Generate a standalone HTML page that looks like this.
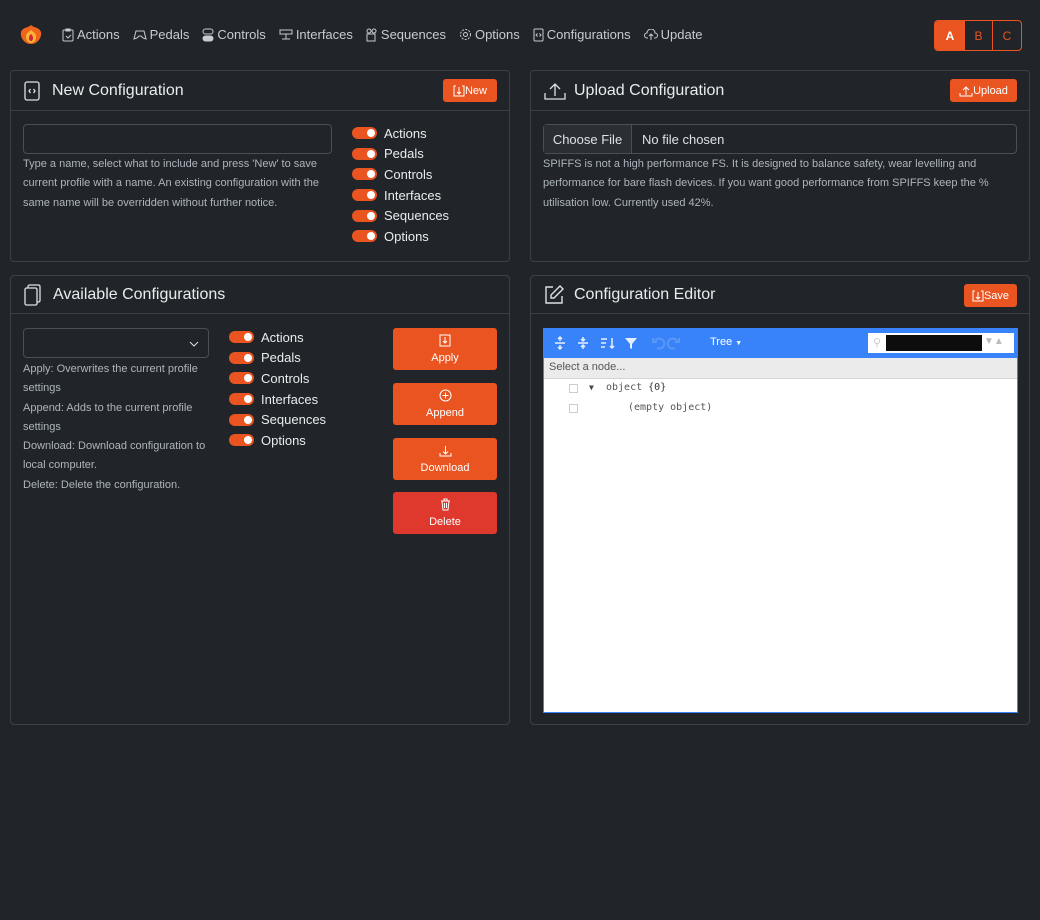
<!DOCTYPE html>
<html><head><meta charset="utf-8"><style>
*{box-sizing:border-box;margin:0;padding:0}
body{width:1040px;height:920px;background:#212529;font-family:"Liberation Sans",sans-serif;color:#dee2e6;position:relative;overflow:hidden}
.a{position:absolute}
.nav{top:27px;font-size:13px;color:#c8cbcf;display:flex;align-items:center;white-space:nowrap}
.nav span{margin-right:13px;display:flex;align-items:center}
.nav svg{margin-right:3px}
.card{position:absolute;border:1px solid #3d4146;border-radius:4px;background:#212529}
.hd{height:40px;border-bottom:1px solid #3d4146;display:flex;align-items:center;padding-left:13px;font-size:16px;color:#e9ecef}
.hd svg{margin-right:12px}
.btn{position:absolute;background:#e95420;color:#fff;border-radius:3px;font-size:11px;display:flex;align-items:center;justify-content:center}
.sm{font-size:11px;color:#adb5bd;line-height:19.3px}
.tg{display:flex;align-items:center;font-size:13px;color:#e9ecef;height:20.6px}
.tg i{display:inline-block;width:25px;height:12px;border-radius:6px;background:#e95420;position:relative;margin-right:7px}
.tg i:after{content:"";position:absolute;right:2px;top:2px;width:8px;height:8px;border-radius:50%;background:#fff}
.bb{position:absolute;left:382px;width:104px;height:42px;background:#e95420;border-radius:3px;color:#fff;font-size:11px;text-align:center;padding-top:6px;line-height:14px}
</style></head><body>
<svg class="a" style="left:19px;top:23px" width="24" height="24" viewBox="0 0 24 24"><path d="M12 2c3 3 8 2 10 7 1 5-3 12-10 12S1 14 2 9c2-5 7-4 10-7z" fill="#f0641e"/><path d="M12 7c2 2 5 3 5 7s-3 6-5 6-5-2-5-6 3-5 5-7z" fill="#f7b733"/><path d="M12 11c1 1 2 2 2 4s-1 3-2 3-2-1-2-3 1-3 2-4z" fill="#d3233d"/></svg>
<div class="a nav" style="left:62px">
<span><svg width="12" height="14" viewBox="0 0 12 14" fill="none" stroke="#c8cbcf"><rect x="1" y="2" width="10" height="11" rx="1"/><path d="M4 1h4v2H4zM4 8l2 2 3-3"/></svg>Actions</span>
<span><svg width="14" height="12" viewBox="0 0 14 12" fill="none" stroke="#c8cbcf"><path d="M3 2h8l2 8-3-1-2-2H6L4 9 1 10z"/></svg>Pedals</span>
<span><svg width="12" height="14" viewBox="0 0 12 14" fill="none" stroke="#c8cbcf"><rect x="1" y="1" width="10" height="5" rx="2.5"/><rect x="1" y="8" width="10" height="5" rx="2.5" fill="#c8cbcf"/></svg>Controls</span>
<span><svg width="14" height="12" viewBox="0 0 14 12" fill="none" stroke="#c8cbcf"><rect x="1" y="1" width="12" height="4"/><path d="M7 5v5M3 10h8"/></svg>Interfaces</span>
<span><svg width="12" height="14" viewBox="0 0 12 14" fill="none" stroke="#c8cbcf"><circle cx="3" cy="3" r="2"/><circle cx="8" cy="3" r="2"/><rect x="1" y="6" width="8" height="7"/></svg>Sequences</span>
<span><svg width="13" height="13" viewBox="0 0 13 13" fill="none" stroke="#c8cbcf"><circle cx="6.5" cy="6.5" r="2"/><circle cx="6.5" cy="6.5" r="5" stroke-dasharray="2 1.3"/></svg>Options</span>
<span><svg width="11" height="14" viewBox="0 0 11 14" fill="none" stroke="#c8cbcf"><rect x="1" y="1" width="9" height="12" rx="1"/><path d="M4.5 5.5 3 7l1.5 1.5M6.5 5.5 8 7 6.5 8.5"/></svg>Configurations</span>
<span><svg width="14" height="12" viewBox="0 0 14 12" fill="none" stroke="#c8cbcf"><path d="M4 9H3a2.5 2.5 0 0 1 0-5 4 4 0 0 1 8 0 2.5 2.5 0 0 1 0 5h-1M7 11V5M5 7l2-2 2 2"/></svg>Update</span>
</div>
<div class="a" style="left:934px;top:20px;width:88px;height:31px;border:1px solid #e95420;border-radius:4px;display:flex;font-size:12px;font-weight:bold;color:#e95420;overflow:hidden">
<div style="width:30px;background:#e95420;color:#fff;display:flex;align-items:center;justify-content:center">A</div>
<div style="width:28px;border-right:1px solid #e95420;display:flex;align-items:center;justify-content:center;font-weight:normal">B</div>
<div style="flex:1;display:flex;align-items:center;justify-content:center;font-weight:normal">C</div></div>

<div class="card" style="left:10px;top:70px;width:500px;height:192px">
<div class="hd"><svg width="16" height="20" viewBox="0 0 16 20" fill="none" stroke="#dee2e6" stroke-width="1.3"><rect x="1" y="1" width="14" height="18" rx="2"/><path d="M6.5 8 5 10l1.5 2M9.5 8 11 10l-1.5 2"/></svg>New Configuration</div>
<div class="btn" style="left:432px;top:8px;width:54px;height:23px"><svg width="12" height="12" viewBox="0 0 12 12" fill="none" stroke="#fff"><path d="M3 1H1v10h10V1H9M6 2v7M4 7l2 2 2-2"/></svg>New</div>
<div class="a" style="left:12px;top:53px;width:309px;height:30px;border:1px solid #4a4f55;border-radius:4px"></div>
<div class="a sm" style="left:12px;top:84px;width:320px">Type a name, select what to include and press 'New' to save current profile with a name. An existing configuration with the same name will be overridden without further notice.</div>
<div class="a" style="left:341px;top:52px"><div class="tg"><i></i>Actions</div><div class="tg"><i></i>Pedals</div><div class="tg"><i></i>Controls</div><div class="tg"><i></i>Interfaces</div><div class="tg"><i></i>Sequences</div><div class="tg"><i></i>Options</div></div>
</div>

<div class="card" style="left:530px;top:70px;width:500px;height:192px">
<div class="hd"><svg width="22" height="18" viewBox="0 0 22 18" fill="none" stroke="#dee2e6" stroke-width="1.3" style="margin-right:8px"><path d="M1 11v6h20v-6M11 14V2M6 7l5-5 5 5"/></svg>Upload Configuration</div>
<div class="btn" style="left:419px;top:8px;width:67px;height:23px"><svg width="14" height="12" viewBox="0 0 14 12" fill="none" stroke="#fff"><path d="M1 8v3h12V8M7 10V2M4 5l3-3 3 3"/></svg>Upload</div>
<div class="a" style="left:12px;top:53px;width:474px;height:30px;border:1px solid #4a4f55;border-radius:4px;display:flex;font-size:13px;align-items:center"><div style="height:100%;width:88px;background:#2b2f34;border-right:1px solid #4a4f55;display:flex;align-items:center;justify-content:center">Choose File</div><div style="padding-left:10px">No file chosen</div></div>
<div class="a sm" style="left:12px;top:84px;width:470px">SPIFFS is not a high performance FS. It is designed to balance safety, wear levelling and performance for bare flash devices. If you want good performance from SPIFFS keep the % utilisation low. Currently used 42%.</div>
</div>

<div class="card" style="left:10px;top:275px;width:500px;height:450px">
<div class="hd" style="height:38px"><svg width="18" height="22" viewBox="0 0 18 22" fill="none" stroke="#dee2e6" stroke-width="1.3" style="margin-right:11px"><rect x="1" y="4" width="12" height="17" rx="1.5"/><path d="M4 4V2.5A1.5 1.5 0 0 1 5.5 1h9A1.5 1.5 0 0 1 16 2.5v14A1.5 1.5 0 0 1 14.5 18H13"/></svg>Available Configurations</div>
<div class="a" style="left:12px;top:52px;width:186px;height:30px;border:1px solid #4a4f55;border-radius:4px"><svg class="a" style="left:165px;top:12px" width="10" height="6" viewBox="0 0 10 6" fill="none" stroke="#dee2e6"><path d="M1 1l4 4 4-4"/></svg></div>
<div class="a sm" style="left:12px;top:84px;width:190px">Apply: Overwrites the current profile settings<br>Append: Adds to the current profile settings<br>Download: Download configuration to local computer.<br>Delete: Delete the configuration.</div>
<div class="a" style="left:218px;top:51px"><div class="tg"><i></i>Actions</div><div class="tg"><i></i>Pedals</div><div class="tg"><i></i>Controls</div><div class="tg"><i></i>Interfaces</div><div class="tg"><i></i>Sequences</div><div class="tg"><i></i>Options</div></div>
<div class="bb" style="top:52px"><svg width="12" height="13" viewBox="0 0 12 13" fill="none" stroke="#fff"><rect x="1" y="1" width="10" height="11"/><path d="M6 3v6M4 7l2 2 2-2"/></svg><br>Apply</div>
<div class="bb" style="top:107px"><svg width="13" height="13" viewBox="0 0 13 13" fill="none" stroke="#fff"><circle cx="6.5" cy="6.5" r="5.5"/><path d="M6.5 3.5v6M3.5 6.5h6"/></svg><br>Append</div>
<div class="bb" style="top:162px"><svg width="13" height="13" viewBox="0 0 13 13" fill="none" stroke="#fff"><path d="M1 9v3h11V9M6.5 2v8M4 7.5l2.5 2.5L9 7.5"/></svg><br>Download</div>
<div class="bb" style="top:216px;background:#df382c"><svg width="11" height="13" viewBox="0 0 11 13" fill="none" stroke="#fff"><path d="M1 3h9M4 3V1h3v2M2 3l1 9h5l1-9M4.5 5v5M6.5 5v5"/></svg><br>Delete</div>
</div>

<div class="card" style="left:530px;top:275px;width:500px;height:450px">
<div class="hd" style="height:38px"><svg width="20" height="20" viewBox="0 0 20 20" fill="none" stroke="#dee2e6" stroke-width="1.4" style="margin-right:10px"><path d="M9 2H2v16h16v-7"/><path d="M16 1l3 3-9 9H7v-3z"/></svg>Configuration Editor</div>
<div class="btn" style="left:433px;top:8px;width:53px;height:23px"><svg width="12" height="12" viewBox="0 0 12 12" fill="none" stroke="#fff"><path d="M3 1H1v10h10V1H9M6 2v7M4 7l2 2 2-2"/></svg>Save</div>
<div class="a" style="left:12px;top:52px;width:475px;height:385px;border:1px solid #3883fa;background:#fff">
<div style="height:29px;background:#3883fa;position:relative">
<svg class="a" style="left:9px;top:7px" width="110" height="14" viewBox="0 0 110 14" fill="#e6efff" stroke="#e6efff"><path d="M2 7h10M7 1v4M5 3l2-2 2 2M7 13V9M5 11l2 2 2-2" fill="none" stroke-width="1.5"/><path d="M25 7h10M30 1v4M28 3l2 2 2-2M30 13V9M28 11l2-2 2 2" fill="none" stroke-width="1.5"/><path d="M48 3h6M48 7h5M48 11h4M59 2v10M57 10l2 2 2-2" fill="none" stroke-width="1.5"/><path d="M72 2h12l-5 6v5l-2-1V8z" stroke="none"/></svg>
<svg class="a" style="left:108px;top:7px" width="40" height="14" viewBox="0 0 40 14" fill="none" stroke="#5a97f5" stroke-width="2"><path d="M3 5a5 5 0 1 1 2 7M1 2v4h4"/><path d="M37 5a5 5 0 1 0-2 7M39 2v4h-4" transform="translate(-12 0)"/></svg>
<div class="a" style="left:166px;top:7px;font-size:11px;color:#fff">Tree <span style="font-size:7px">▼</span></div>
<div class="a" style="left:324px;top:4px;width:146px;height:20px;background:#fff"><div class="a" style="left:5px;top:3px;font-size:11px;color:#ccc">⚲</div><div class="a" style="left:18px;top:2px;width:96px;height:16px;background:#0d0d0d"></div><div class="a" style="left:116px;top:3px;font-size:10px;color:#bbb">▼▲</div></div>
</div>
<div style="height:21px;background:#ebebeb;border-bottom:1px solid #d3d3d3;font-size:11px;color:#555;padding:3px 5px">Select a node...</div>
<div style="font-family:'DejaVu Sans Mono',monospace;font-size:10px;color:#555;position:relative">
<div class="a" style="left:25px;top:5px;width:9px;height:9px;border:1px solid #ccc"></div>
<div class="a" style="left:45px;top:4px;font-size:8px;color:#444">▼</div>
<div class="a" style="left:62px;top:3px">object <span style="color:#333">{0}</span></div>
<div class="a" style="left:25px;top:25px;width:9px;height:9px;border:1px solid #ccc"></div>
<div class="a" style="left:84px;top:23px">(empty object)</div>
</div>
</div>
</div>
</body></html>
